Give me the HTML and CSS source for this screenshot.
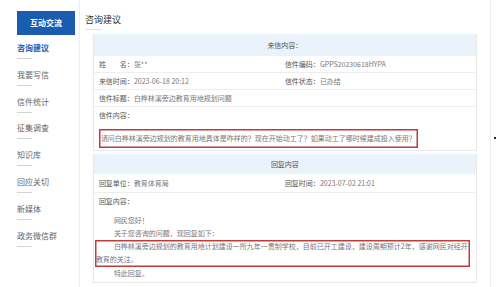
FILE: index.html
```html
<!DOCTYPE html>
<html>
<head>
  <title>咨询建议</title>
  <link rel="stylesheet" href="styles.css">
</head>
<body>
  <div class="page">
    <div class="side">
      <div class="side-btn">互动交流</div>
      <div class="nav">
        <div class="nav-item on"><span>咨询建议</span><i></i></div>
        <div class="nav-item"><span>我要写信</span><i></i></div>
        <div class="nav-item"><span>信件统计</span><i></i></div>
        <div class="nav-item"><span>征集调查</span><i></i></div>
        <div class="nav-item"><span>知识库</span><i></i></div>
        <div class="nav-item"><span>回应关切</span><i></i></div>
        <div class="nav-item"><span>新媒体</span><i></i></div>
        <div class="nav-item"><span>政务微信群</span><i></i></div>
      </div>
    </div>

    <div class="main">
      <div class="title">咨询建议</div>
      <div class="title-line"></div>

      <div class="panel">
        <div class="panel-head">来信内容：</div>
        <div class="row line">
          <div class="cell"><span class="lbl">姓　　名：</span>张**</div>
          <div class="cell"><span class="lbl">信件编码：</span>GPPS20230618HYPA</div>
        </div>
        <div class="row line">
          <div class="cell"><span class="lbl">来信时间：</span>2023-06-18 20:12</div>
          <div class="cell"><span class="lbl">信件状态：</span>已办结</div>
        </div>
        <div class="row line">
          <div class="cell wide"><span class="lbl">信件标题：</span>白桦林溪旁边教育用地规划问题</div>
        </div>
        <div class="row">
          <div class="cell wide"><span class="lbl">信件内容：</span></div>
        </div>
        <div class="ask">
          <div class="mark-box">请问白桦林溪旁边规划的教育用地具体是咋样的？现在开始动工了？如果动工了哪时候建成投入使用？</div>
        </div>
      </div>

      <div class="panel second">
        <div class="panel-head">回复内容</div>
        <div class="row line tall">
          <div class="cell"><span class="lbl">回复单位：</span>教育体育局</div>
          <div class="cell"><span class="lbl">回复时间：</span>2023-07-02 21:01</div>
        </div>
        <div class="row">
          <div class="cell wide"><span class="lbl">回复内容：</span></div>
        </div>
        <div class="reply">
          <p>网民您好！</p>
          <p>关于您咨询的问题，现回复如下：</p>
          <div class="mark-wrap">
            <p>白桦林溪旁边规划的教育用地计划建设一所九年一贯制学校，目前已开工建设，建设周期预计2年，感谢网民对经开<br>教育的关注。</p>
          </div>
          <p>特此回复。</p>
        </div>
      </div>
    </div>

    <div class="edge"><b class="dot"></b></div>
  </div>
</body>
</html>
```

FILE: styles.css
```css
body {
  margin: 0;
  padding: 0;
  background-color: #fff;
  font-family: "Noto Sans CJK SC", "Liberation Sans", sans-serif;
  color: #666;
}

.page {
  display: flex;
  width: 498px;
  height: 287px;
  overflow: hidden;
}

.side {
  width: 80px;
  border-right: 1px solid #efefef;
  padding: 11px 0 0 17px;
  box-sizing: border-box;
}

.side-btn {
  width: 58px;
  height: 24px;
  background-color: #1a5cb0;
  color: #fff;
  font-size: 8px;
  font-weight: bold;
  line-height: 24px;
  text-align: center;
}

.nav {
  margin-top: 8px;
}

.nav-item {
  height: 26.8px;
}

.nav-item span {
  display: block;
  font-size: 8px;
  line-height: 10px;
  color: #666;
}

.nav-item i {
  display: block;
  width: 15px;
  height: 1px;
  margin-top: 5px;
  background-color: #d4d4d4;
}

.nav-item.on span {
  color: #1a5cb0;
  font-weight: bold;
}

.main {
  width: 411px;
  padding-left: 5px;
  box-sizing: border-box;
}

.title {
  margin-top: 14px;
  font-size: 9px;
  line-height: 12px;
  color: #333;
}

.title-line {
  width: 17px;
  height: 1px;
  margin-top: 3px;
  background-color: #e2e2e2;
}

.panel {
  width: 384px;
  margin: 4px 0 0 8px;
  border: 1px solid #e9e9e9;
  border-top: none;
  box-sizing: border-box;
  font-size: 7px;
}

.panel.second {
  margin-top: 3px;
}

.panel-head {
  height: 22px;
  line-height: 22px;
  background-color: #eaf2fb;
  text-align: center;
  color: #555;
}

.panel.second .panel-head {
  height: 20px;
  line-height: 20px;
}

.row {
  display: flex;
  height: 17px;
  line-height: 17px;
  padding-left: 5px;
}

.row.line {
  border-bottom: 1px solid #eee;
  height: 16px;
}

.row.tall {
  height: 18px;
  line-height: 19px;
}

.cell {
  width: 186px;
  color: #777;
  white-space: nowrap;
}

.cell.wide {
  width: auto;
}

.lbl {
  color: #555;
}

.ask {
  padding: 5px 0 2px 5px;
}

.mark-box {
  width: 319px;
  height: 19px;
  box-sizing: border-box;
  box-shadow: inset 0 0 0 1.5px #c23b3b;
  padding-left: 2px;
  line-height: 19px;
  color: #777;
  white-space: nowrap;
}

.reply {
  padding: 3.5px 4px 2px 2px;
  line-height: 13.3px;
  color: #777;
}

.reply p {
  margin: 0;
  text-indent: 18px;
  white-space: nowrap;
}

.mark-wrap {
  margin: 0 2px 0 -1px;
  padding-left: 1px;
  box-shadow: inset 0 0 0 1.5px #c23b3b;
}

.edge {
  position: relative;
  width: 7px;
  border-left: 1px solid #ececec;
}

.dot {
  position: absolute;
  left: 3px;
  top: 137px;
  width: 2px;
  height: 2px;
  background-color: #222;
}
```
